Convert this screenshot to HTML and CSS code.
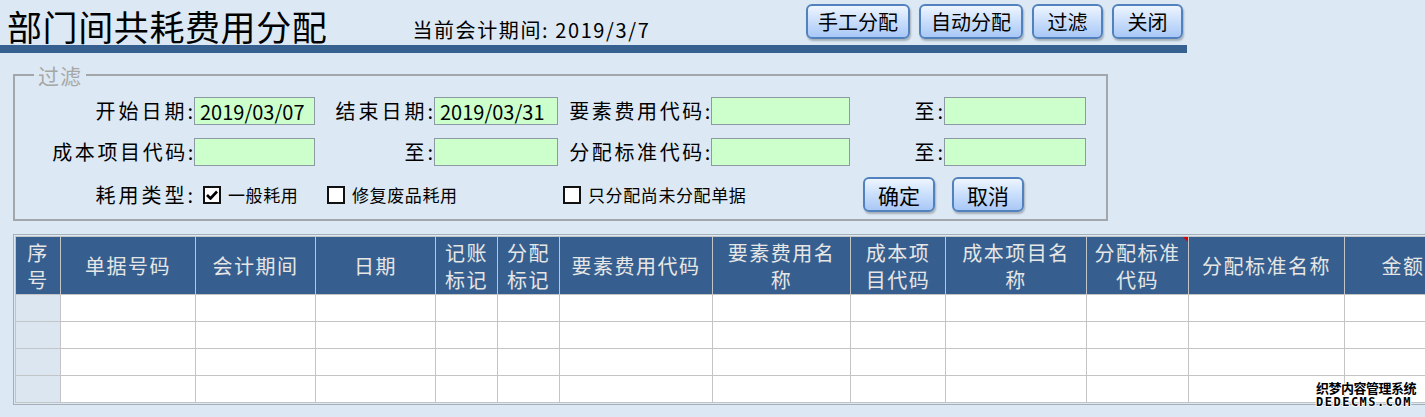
FILE: index.html
```html
<!DOCTYPE html>
<html lang="zh-CN">
<head>
    <meta charset="UTF-8">
    <title>部门间共耗费用分配</title>
    <link rel="stylesheet" href="styles.css">
</head>
<body>
    <div class="topbar">
        <h1 class="title">部门间共耗费用分配</h1>
        <span class="period">当前会计期间: 2019/3/7</span>
        <div class="actions">
            <button class="btn">手工分配</button>
            <button class="btn">自动分配</button>
            <button class="btn btn-short">过滤</button>
            <button class="btn btn-short">关闭</button>
        </div>
    </div>
    <div class="rule"></div>

    <fieldset class="filter">
        <legend>过滤</legend>
        <div class="filter-grid">
            <label class="lbl">开始日期:</label>
            <input class="field" value="2019/03/07">
            <label class="lbl">结束日期:</label>
            <input class="field" value="2019/03/31">
            <label class="lbl lbl-long">要素费用代码:</label>
            <input class="field">
            <label class="lbl">至:</label>
            <input class="field">

            <label class="lbl lbl-long">成本项目代码:</label>
            <input class="field">
            <label class="lbl">至:</label>
            <input class="field">
            <label class="lbl lbl-long">分配标准代码:</label>
            <input class="field">
            <label class="lbl">至:</label>
            <input class="field">
        </div>
        <div class="filter-row">
            <span class="lbl lbl-type">耗用类型:</span>
            <label class="check check-1">
                <span class="box checked">
                    <svg width="12" height="10" viewBox="0 0 12 10"><path d="M1 5 L4.5 8.5 L11 1.5" fill="none" stroke="#000" stroke-width="2.6"/></svg>
                </span>
                一般耗用
            </label>
            <label class="check check-2"><span class="box"></span>修复废品耗用</label>
            <label class="check check-3"><span class="box"></span>只分配尚未分配单据</label>
            <button class="btn btn-form">确定</button>
            <button class="btn btn-form">取消</button>
        </div>
    </fieldset>

    <div class="grid-wrap">
        <table class="grid">
            <colgroup>
                <col style="width:45px"><col style="width:135px"><col style="width:120px"><col style="width:120px">
                <col style="width:62px"><col style="width:62px"><col style="width:153px"><col style="width:138px">
                <col style="width:95px"><col style="width:141px"><col style="width:102px"><col style="width:156px">
                <col style="width:117px">
            </colgroup>
            <thead>
                <tr>
                    <th>序<br>号</th>
                    <th>单据号码</th>
                    <th>会计期间</th>
                    <th>日期</th>
                    <th>记账<br>标记</th>
                    <th>分配<br>标记</th>
                    <th>要素费用代码</th>
                    <th>要素费用名<br>称</th>
                    <th>成本项<br>目代码</th>
                    <th>成本项目名<br>称</th>
                    <th class="flagged">分配标准<br>代码</th>
                    <th>分配标准名称</th>
                    <th>金额</th>
                </tr>
            </thead>
            <tbody>
                <tr><td class="idx"></td><td></td><td></td><td></td><td></td><td></td><td></td><td></td><td></td><td></td><td></td><td></td><td></td></tr>
                <tr><td class="idx"></td><td></td><td></td><td></td><td></td><td></td><td></td><td></td><td></td><td></td><td></td><td></td><td></td></tr>
                <tr><td class="idx"></td><td></td><td></td><td></td><td></td><td></td><td></td><td></td><td></td><td></td><td></td><td></td><td></td></tr>
                <tr><td class="idx"></td><td></td><td></td><td></td><td></td><td></td><td></td><td></td><td></td><td></td><td></td><td></td><td></td></tr>
            </tbody>
        </table>
    </div>

    <div class="watermark">
        <div class="wm-cn">织梦内容管理系统</div>
        <div class="wm-en">DEDECMS.COM</div>
    </div>
</body>
</html>
```

FILE: styles.css
```css
html {
    background-color: #dce9f5;
}

body {
    margin: 0;
    height: 417px;
    overflow: hidden;
    position: relative;
    font-family: "Noto Sans CJK SC", "Noto Sans", sans-serif;
    color: #000;
}

.topbar {
    display: flex;
    align-items: flex-start;
    width: 1187px;
}

.title {
    flex: none;
    margin: 0 0 -6px 7px;
    font-size: 35px;
    font-weight: normal;
    line-height: normal;
    letter-spacing: 0.6px;
    white-space: nowrap;
}

.period {
    flex: none;
    margin: 18px 0 0 85px;
    font-size: 20px;
    line-height: 24px;
    letter-spacing: 1.6px;
}

.actions {
    display: flex;
    gap: 9px;
    margin: 4px 4px 0 auto;
}

.btn {
    height: 35px;
    padding: 0 10px;
    font-family: inherit;
    font-size: 20px;
    line-height: 30px;
    color: #000;
    background: linear-gradient(#eef5ff, #c6dcfb 55%, #a9c8f6);
    border: 2px solid #5182bd;
    border-radius: 6px;
    box-shadow: 1px 2px 2px rgba(0, 0, 0, 0.25);
    cursor: pointer;
}

.btn-short {
    width: 71px;
}

.rule {
    position: relative;
    width: 1187px;
    height: 8px;
    background-color: #36608f;
}

.filter {
    box-sizing: border-box;
    width: 1095px;
    margin: 11px 0 0 13px;
    padding: 0 0 7px;
    border: 2px solid #a3a7ab;
}

.filter legend {
    margin-left: 19px;
    padding: 0 4px;
    font-size: 21px;
    line-height: 22px;
    letter-spacing: 1px;
    color: #a6a6a6;
}

.filter-grid {
    display: grid;
    grid-template-columns: 179px 121px 119px 124px 153px 139px 94px 142px;
    grid-auto-rows: 28px;
    row-gap: 13px;
    margin-top: 11px;
}

.lbl {
    font-size: 20px;
    line-height: 28px;
    letter-spacing: 3px;
    text-align: right;
    margin-right: -2px;
    white-space: nowrap;
}

.lbl-long {
    letter-spacing: 2.6px;
}

.field {
    box-sizing: border-box;
    width: 100%;
    height: 28px;
    margin: 0;
    padding: 0 4px 0 5px;
    font-family: inherit;
    font-size: 20px;
    letter-spacing: 0;
    color: #000;
    background-color: #ccffcc;
    border: 1px solid #8d99a3;
    border-radius: 0;
    outline: none;
}

.filter-row {
    display: flex;
    align-items: center;
    height: 35px;
    margin-top: 11px;
}

.lbl-type {
    width: 181px;
    box-sizing: border-box;
}

.check {
    display: flex;
    align-items: center;
    gap: 7px;
    font-size: 17px;
    letter-spacing: 0.6px;
    white-space: nowrap;
}

.check-1 {
    width: 124px;
    margin-left: 9px;
}

.check-2 {
    width: 236px;
}

.check-3 {
    width: 300px;
}

.box {
    box-sizing: border-box;
    display: flex;
    align-items: center;
    justify-content: center;
    width: 18px;
    height: 18px;
    background-color: #fff;
    border: 2px solid #111;
}

.btn-form {
    width: 72px;
    padding: 0;
    font-size: 21px;
    margin-right: 17px;
}

.grid-wrap {
    width: 1460px;
    margin: 13px 0 0 13px;
    padding: 1px;
    border: 1px solid #a6aeb8;
}

.grid {
    table-layout: fixed;
    border-collapse: collapse;
    width: 1446px;
}

.grid th,
.grid td {
    padding: 0;
    border: 1px solid #c2c4c6;
}

.grid th {
    height: 57px;
    font-size: 20px;
    font-weight: normal;
    line-height: 27px;
    letter-spacing: 1.5px;
    color: #e6e6e6;
    background-color: #365f8f;
    text-align: center;
    white-space: nowrap;
}

.grid th.flagged {
    position: relative;
}

.grid th.flagged::after {
    content: "";
    position: absolute;
    top: 0;
    right: 0;
    border-top: 5px solid #e00000;
    border-left: 5px solid transparent;
}

.grid td {
    height: 26px;
    background-color: #fff;
}

.grid td.idx {
    background-color: #dce6f0;
}

.watermark {
    position: absolute;
    left: 1316px;
    top: 380px;
    font-weight: bold;
    color: #000;
    text-shadow: 1px 0 #fff, -1px 0 #fff, 0 1px #fff, 0 -1px #fff;
    line-height: 15px;
}

.wm-cn {
    font-size: 13px;
    letter-spacing: -0.5px;
}

.wm-en {
    font-family: "DejaVu Sans Mono", monospace;
    font-size: 12px;
    letter-spacing: 1.5px;
}
```
